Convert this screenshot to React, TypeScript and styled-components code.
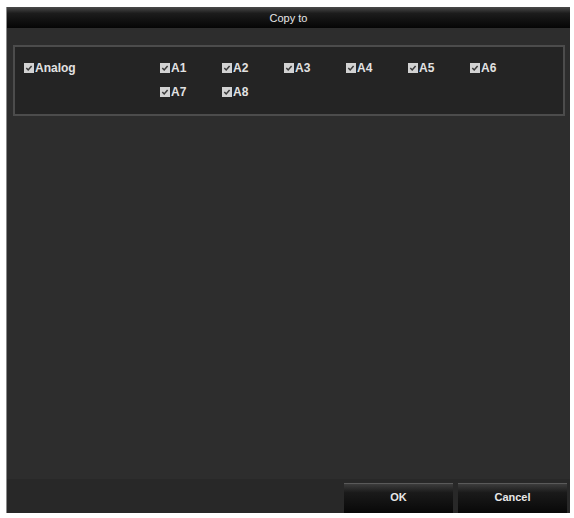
import styled, { createGlobalStyle } from "styled-components";

const GlobalStyle = createGlobalStyle`
  body {
    margin: 0;
    background: #ffffff;
    font-family: "Liberation Sans", Arial, sans-serif;
  }
`;

const Page = styled.div`
  padding: 7px 4px 5px 6px;
`;

const Dialog = styled.div`
  width: 564px;
  height: 506px;
  display: flex;
  flex-direction: column;
  background: #2d2d2d;
  border-left: 1px solid #8a8a8a;
  box-sizing: border-box;
`;

const Header = styled.div`
  height: 21px;
  display: flex;
  align-items: center;
  justify-content: center;
  background: linear-gradient(#4a4a4a 0%, #1c1c1c 30%, #050505 100%);
  color: #e6e6e6;
  font-size: 11px;
`;

const Body = styled.div`
  flex: 1;
  padding: 17px 5px 0 6px;
`;

const Group = styled.div`
  height: 71px;
  box-sizing: border-box;
  border: 2px solid #4c4c4c;
  background: #242424;
  padding: 15px 0 0 9px;
  display: grid;
  grid-template-columns: 136px repeat(6, 62px);
  grid-auto-rows: 24px;
`;

const Item = styled.label<{ $col?: number }>`
  grid-column: ${(p) => p.$col ?? "auto"};
  display: flex;
  align-items: flex-start;
  gap: 1px;
  color: #e2e2e2;
  font-size: 12px;
  font-weight: bold;
  line-height: 13px;
`;

const Box = styled.svg`
  width: 10px;
  height: 10px;
  margin-top: 1px;
  flex: none;
`;

const Footer = styled.div`
  height: 34px;
  box-sizing: border-box;
  background: #282828;
  display: flex;
  justify-content: flex-end;
  align-items: flex-end;
  gap: 5px;
  padding-right: 3px;
`;

const Button = styled.button`
  width: 109px;
  height: 30px;
  border: none;
  border-top: 1px solid #5a5a5a;
  background: linear-gradient(#3c3c3c 0%, #1a1a1a 30%, #080808 100%);
  color: #e8e8e8;
  font-family: "Liberation Sans", Arial, sans-serif;
  font-size: 11px;
  font-weight: bold;
  padding: 0 0 3px;
`;

const Check = () => (
  <Box viewBox="0 0 10 10">
    <rect x="0" y="0" width="10" height="10" fill="#d2d2d2" />
    <path d="M2.3 5 L4.2 7 L7.6 3" stroke="#3a3a3a" strokeWidth="1.5" fill="none" />
  </Box>
);

const channels = ["A1", "A2", "A3", "A4", "A5", "A6", "A7", "A8"];

export default function App() {
  return (
    <>
      <GlobalStyle />
      <Page>
        <Dialog>
          <Header>Copy to</Header>
          <Body>
            <Group>
              <Item>
                <Check />
                Analog
              </Item>
              {channels.map((ch, i) => (
                <Item key={ch} $col={i === 6 ? 2 : undefined}>
                  <Check />
                  {ch}
                </Item>
              ))}
            </Group>
          </Body>
          <Footer>
            <Button>OK</Button>
            <Button>Cancel</Button>
          </Footer>
        </Dialog>
      </Page>
    </>
  );
}
